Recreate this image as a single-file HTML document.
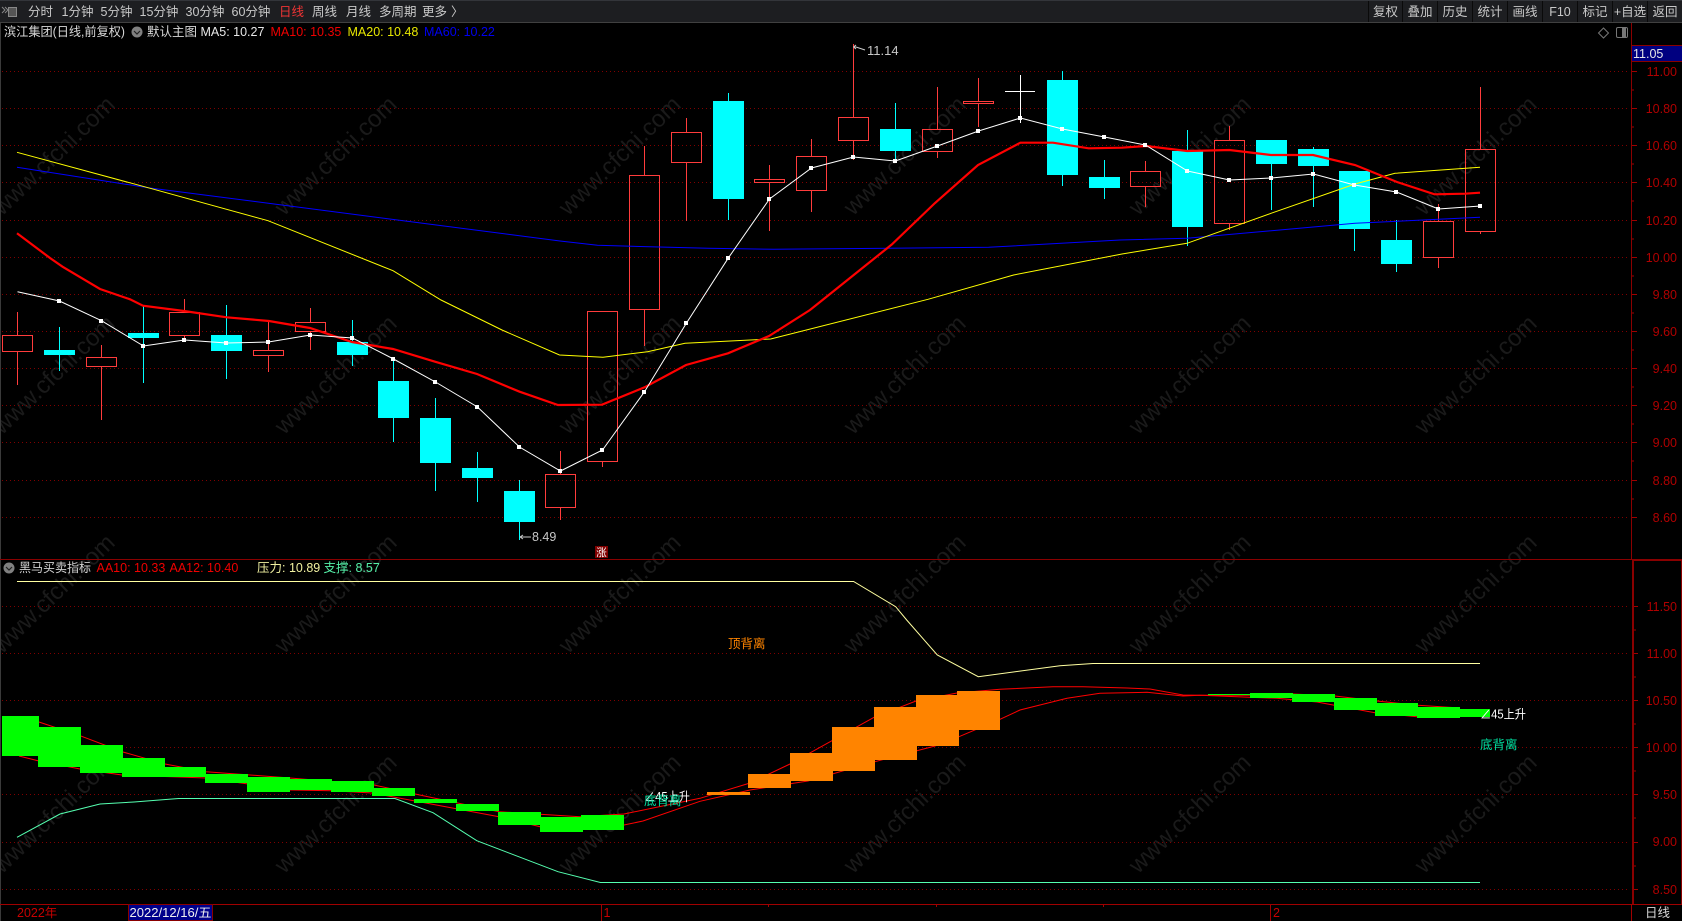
<!DOCTYPE html>
<html lang="zh"><head><meta charset="utf-8"><title>滨江集团</title>
<style>
html,body{margin:0;padding:0;background:#000;width:1682px;height:921px;overflow:hidden}
svg{display:block;position:absolute;left:0;top:0}
text{font-family:"Liberation Sans","Noto Sans CJK SC",sans-serif;font-size:12.5px}
.tb{fill:#c9c9c9;font-size:12.5px}
.c{text-anchor:middle}
.ax{fill:#b00000;font-size:12.5px;text-anchor:end}
.wm{fill:#1a1a1a;font-size:24px;text-anchor:middle;dominant-baseline:central}
.g{stroke:#800000;stroke-width:1;stroke-dasharray:1 3;fill:none}
.r{stroke:#ff3c3c;stroke-width:1;fill:none}
.cy{stroke:#00ffff;stroke-width:1;fill:none}
.cb{fill:#00ffff}
.gb{fill:#00ff00}
.ob{fill:#ff8400}
.t{stroke:#a00000;stroke-width:1;fill:none}
</style></head><body>
<svg width="1682" height="921" viewBox="0 0 1682 921" xmlns="http://www.w3.org/2000/svg">
<rect width="1682" height="921" fill="#000"/>

<!-- watermarks -->
<g class="wmg">
<text class="wm" x="54" y="156" transform="rotate(-44 54 156)">www.cfchi.com</text>
<text class="wm" x="336" y="156" transform="rotate(-44 336 156)">www.cfchi.com</text>
<text class="wm" x="620" y="156" transform="rotate(-44 620 156)">www.cfchi.com</text>
<text class="wm" x="905" y="156" transform="rotate(-44 905 156)">www.cfchi.com</text>
<text class="wm" x="1190" y="156" transform="rotate(-44 1190 156)">www.cfchi.com</text>
<text class="wm" x="1476" y="156" transform="rotate(-44 1476 156)">www.cfchi.com</text>
<text class="wm" x="54" y="375" transform="rotate(-44 54 375)">www.cfchi.com</text>
<text class="wm" x="336" y="375" transform="rotate(-44 336 375)">www.cfchi.com</text>
<text class="wm" x="620" y="375" transform="rotate(-44 620 375)">www.cfchi.com</text>
<text class="wm" x="905" y="375" transform="rotate(-44 905 375)">www.cfchi.com</text>
<text class="wm" x="1190" y="375" transform="rotate(-44 1190 375)">www.cfchi.com</text>
<text class="wm" x="1476" y="375" transform="rotate(-44 1476 375)">www.cfchi.com</text>
<text class="wm" x="54" y="594" transform="rotate(-44 54 594)">www.cfchi.com</text>
<text class="wm" x="336" y="594" transform="rotate(-44 336 594)">www.cfchi.com</text>
<text class="wm" x="620" y="594" transform="rotate(-44 620 594)">www.cfchi.com</text>
<text class="wm" x="905" y="594" transform="rotate(-44 905 594)">www.cfchi.com</text>
<text class="wm" x="1190" y="594" transform="rotate(-44 1190 594)">www.cfchi.com</text>
<text class="wm" x="1476" y="594" transform="rotate(-44 1476 594)">www.cfchi.com</text>
<text class="wm" x="54" y="814" transform="rotate(-44 54 814)">www.cfchi.com</text>
<text class="wm" x="336" y="814" transform="rotate(-44 336 814)">www.cfchi.com</text>
<text class="wm" x="620" y="814" transform="rotate(-44 620 814)">www.cfchi.com</text>
<text class="wm" x="905" y="814" transform="rotate(-44 905 814)">www.cfchi.com</text>
<text class="wm" x="1190" y="814" transform="rotate(-44 1190 814)">www.cfchi.com</text>
<text class="wm" x="1476" y="814" transform="rotate(-44 1476 814)">www.cfchi.com</text>
</g>

<!-- grid -->
<g shape-rendering="crispEdges">
<path class="g" d="M2 71.5H1627M2 108.5H1627M2 145.5H1627M2 182.5H1627M2 220.5H1627M2 257.5H1627M2 294.5H1627M2 331.5H1627M2 368.5H1627M2 405.5H1627M2 442.5H1627M2 480.5H1627M2 517.5H1627"/>
<path class="g" d="M2 606.5H1627M2 653.5H1627M2 700.5H1627M2 747.5H1627M2 794.5H1627M2 842.5H1627M2 889.5H1627"/>
</g>

<!-- candles -->
<g shape-rendering="crispEdges">
<g class="r">
<path d="M17.5 312V335M17.5 352V385"/><rect x="2.5" y="335.5" width="30" height="16"/>
<path d="M101.5 345V357M101.5 367V420"/><rect x="86.5" y="357.5" width="30" height="9"/>
<path d="M184.5 299V312M184.5 336V339"/><rect x="169.5" y="312.5" width="30" height="23"/>
<path d="M268.5 322V350M268.5 356V372"/><rect x="253.5" y="350.5" width="30" height="5"/>
<path d="M310.5 308V322M310.5 332V350"/><rect x="295.5" y="322.5" width="30" height="9"/>
<path d="M560.5 451V474M560.5 508V520"/><rect x="545.5" y="474.5" width="30" height="33"/>
<path d="M602.5 462V467"/><rect x="587.5" y="311.5" width="30" height="150"/>
<path d="M644.5 146V175M644.5 309V346"/><rect x="629.5" y="175.5" width="30" height="134"/>
<path d="M686.5 118V132M686.5 163V221"/><rect x="671.5" y="132.5" width="30" height="30"/>
<path d="M769.5 165V179M769.5 182V231"/><rect x="754.5" y="179.5" width="30" height="3"/>
<path d="M811.5 139V156M811.5 191V212"/><rect x="796.5" y="156.5" width="30" height="34"/>
<path d="M853.5 44V117M853.5 141V160"/><rect x="838.5" y="117.5" width="30" height="23"/>
<path d="M937.5 87V129M937.5 152V158"/><rect x="922.5" y="129.5" width="30" height="22"/>
<path d="M978.5 78V101M978.5 104V127"/><rect x="963.5" y="101.5" width="30" height="2"/>
<path d="M1145.5 161V171M1145.5 187V207"/><rect x="1130.5" y="171.5" width="30" height="15"/>
<path d="M1229.5 126V140M1229.5 224V230"/><rect x="1214.5" y="140.5" width="30" height="83"/>
<path d="M1438.5 204V221M1438.5 258V268"/><rect x="1423.5" y="221.5" width="30" height="36"/>
<path d="M1480.5 87V149M1480.5 232V234"/><rect x="1465.5" y="149.5" width="30" height="82"/>
</g>
<g class="cy">
<path d="M59.5 327V371M143.5 305V383M226.5 305V379M352.5 320V366M393.5 359V442M435.5 398V491M477.5 452V502M519.5 480V540"/>
<path d="M728.5 93V220M895.5 103V160M1062.5 71V186M1104.5 160V199M1187.5 130V246M1271.5 140V210M1313.5 147V207M1354.5 171V251M1396.5 220V272"/>
</g>
<rect class="cb" x="44" y="350" width="31" height="5"/>
<rect class="cb" x="128" y="333" width="31" height="5"/>
<rect class="cb" x="211" y="335" width="31" height="16"/>
<rect class="cb" x="337" y="342" width="31" height="13"/>
<rect class="cb" x="378" y="381" width="31" height="37"/>
<rect class="cb" x="420" y="418" width="31" height="45"/>
<rect class="cb" x="462" y="468" width="31" height="10"/>
<rect class="cb" x="504" y="491" width="31" height="31"/>
<rect class="cb" x="713" y="101" width="31" height="98"/>
<rect class="cb" x="880" y="129" width="31" height="22"/>
<rect class="cb" x="1047" y="80" width="31" height="95"/>
<rect class="cb" x="1089" y="177" width="31" height="11"/>
<rect class="cb" x="1172" y="151" width="31" height="76"/>
<rect class="cb" x="1256" y="140" width="31" height="24"/>
<rect class="cb" x="1298" y="149" width="31" height="17"/>
<rect class="cb" x="1339" y="171" width="31" height="58"/>
<rect class="cb" x="1381" y="240" width="31" height="24"/>
<path d="M1020.5 75V123M1005 91.5H1035" stroke="#fff" stroke-width="1" fill="none"/>
</g>

<!-- MA lines -->
<polyline fill="none" stroke="#0000ff" stroke-width="1" points="17,167.3 148,187.7 560,241 597.5,245.3 708,248.3 774,249.3 988.6,247.3 1120,240 1187,238.3 1355,223.3 1480,217.3"/>
<polyline fill="none" stroke="#ffff00" stroke-width="1" points="17,152.3 148,187.7 268,220.7 393,270.7 441,300 502,330 559.5,355 603,357.3 647.5,351.7 685,343.3 770.7,339 928,299.3 1013.6,275 1122,254 1187,243.3 1271,213.3 1355,184 1395,173.3 1480,167.3"/>
<polyline fill="none" stroke="#ff0000" stroke-width="2.2" points="17,233.3 50,258 62.5,266.7 100,289 130,299.3 143,305.7 184,311 226.6,317.3 269,321 310,328 352,342 393,349 435,361.7 477,374 519.6,391.7 558,405 602,404.7 644.6,387.3 686,365 728,353.3 769,336 810,310 822.5,300 892,244.3 935,203 978,165 1020.4,142.7 1053,142.7 1088.6,148.3 1122,147.7 1146,146 1187,151 1229.5,150 1271,155 1313,155 1355,165 1397,182 1434.5,194.3 1465,193.7 1480,192.7"/>
<polyline fill="none" stroke="#ffffff" stroke-width="1" points="17.5,291.7 59.5,301 101.5,320.7 143.5,346 184.5,340 226.5,343 268.5,342 310.5,335 352.5,338 393.5,359 435.5,382 477.5,407 519.5,447 560.5,471 602.5,450 644.5,391.7 686.5,323 728.5,257.7 769.5,199 811.5,168 853.5,157 895.5,161 937.5,146 978.5,131 1020.5,118 1062.5,129 1104.5,137 1145.5,145 1187.5,171 1229.5,180 1271.5,178 1313.5,174 1354.5,185 1396.5,192 1438.5,209 1480.5,206"/>
<g fill="#fff" shape-rendering="crispEdges">
<rect x="57" y="299" width="4" height="4"/><rect x="99" y="319" width="4" height="4"/><rect x="141" y="344" width="4" height="4"/><rect x="182" y="338" width="4" height="4"/><rect x="224" y="341" width="4" height="4"/><rect x="266" y="340" width="4" height="4"/><rect x="308" y="333" width="4" height="4"/><rect x="350" y="336" width="4" height="4"/><rect x="391" y="357" width="4" height="4"/><rect x="433" y="380" width="4" height="4"/><rect x="475" y="405" width="4" height="4"/><rect x="517" y="445" width="4" height="4"/><rect x="558" y="469" width="4" height="4"/><rect x="600" y="448" width="4" height="4"/><rect x="642" y="390" width="4" height="4"/><rect x="684" y="321" width="4" height="4"/><rect x="726" y="256" width="4" height="4"/><rect x="767" y="197" width="4" height="4"/><rect x="809" y="166" width="4" height="4"/><rect x="851" y="155" width="4" height="4"/><rect x="893" y="159" width="4" height="4"/><rect x="935" y="144" width="4" height="4"/><rect x="976" y="129" width="4" height="4"/><rect x="1018" y="116" width="4" height="4"/><rect x="1060" y="127" width="4" height="4"/><rect x="1102" y="135" width="4" height="4"/><rect x="1143" y="143" width="4" height="4"/><rect x="1185" y="169" width="4" height="4"/><rect x="1227" y="178" width="4" height="4"/><rect x="1269" y="176" width="4" height="4"/><rect x="1311" y="172" width="4" height="4"/><rect x="1352" y="183" width="4" height="4"/><rect x="1394" y="190" width="4" height="4"/><rect x="1436" y="207" width="4" height="4"/><rect x="1478" y="204" width="4" height="4"/>
</g>

<!-- high / low labels -->
<path d="M853.5 47H856M853.5 47L856 45M853.5 47L856 49M856 47L865 50" stroke="#ccc" fill="none" stroke-width="1"/>
<text x="867" y="55" fill="#c8c8c8" style="font-size:13px">11.14</text>
<path d="M520 537H531M520 537L523 535M520 537L523 539" stroke="#ccc" fill="none" stroke-width="1"/>
<text x="532" y="541" fill="#c8c8c8">8.49</text>
<rect x="595" y="546" width="13" height="12" fill="#800000"/>
<text x="601.5" y="556" class="c" fill="#fff" style="font-size:10.5px">涨</text>

<!-- lower panel lines -->
<polyline fill="none" stroke="#ff0000" stroke-width="1" points="39,722 80,735.7 123,752 165,764 206,771.7 290,778 374,785 415,794 499,811.7 580,816.7 624,814 700,798.3 750,783 790,764 832,740.7 874,717.3 916,701 957,693 1000,689.3 1053,686.7 1083,686.7 1127,688 1150,689 1183,695 1200,695.3 1247,695.3 1293,694 1335,696 1377,701 1418,705.3 1460,708"/>
<polyline fill="none" stroke="#ff0000" stroke-width="1" points="19,756 38,760.7 80,769 122,775 206,778 290,790 332,790.7 372,793 415,801 499,816.7 540,826.7 624,825 643,821 700,801.3 750,790 808,781 875,761.7 935,746 959,736.7 1000,719.3 1020,710 1067,698.3 1100,693.3 1147,692.3 1183,696 1200,695.3 1277,698.3 1317,702 1333,705 1375,712.7 1417,716.7"/>
<g shape-rendering="crispEdges">
<rect class="gb" x="2" y="716" width="37" height="40"/>
<rect class="gb" x="38" y="727" width="43" height="40"/>
<rect class="gb" x="80" y="745" width="43" height="28"/>
<rect class="gb" x="122" y="758" width="43" height="19"/>
<rect class="gb" x="165" y="767" width="41" height="10"/>
<rect class="gb" x="205" y="774" width="43" height="9"/>
<rect class="gb" x="247" y="777" width="43" height="15"/>
<rect class="gb" x="290" y="779" width="42" height="11"/>
<rect class="gb" x="331" y="781" width="43" height="11"/>
<rect class="gb" x="372" y="788" width="43" height="8"/>
<rect class="gb" x="414" y="799" width="43" height="4"/>
<rect class="gb" x="456" y="804" width="43" height="7"/>
<rect class="gb" x="498" y="812" width="43" height="13"/>
<rect class="gb" x="540" y="817" width="43" height="15"/>
<rect class="gb" x="581" y="815" width="43" height="15"/>
<rect class="ob" x="707" y="792" width="43" height="3"/>
<rect class="ob" x="748" y="774" width="43" height="14"/>
<rect class="ob" x="790" y="753" width="43" height="28"/>
<rect class="ob" x="832" y="727" width="43" height="44"/>
<rect class="ob" x="874" y="707" width="43" height="53"/>
<rect class="ob" x="916" y="695" width="43" height="51"/>
<rect class="ob" x="957" y="691" width="43" height="39"/>
<rect class="gb" x="1208" y="694" width="42" height="1"/>
<rect class="gb" x="1250" y="693" width="43" height="5"/>
<rect class="gb" x="1292" y="694" width="43" height="8"/>
<rect class="gb" x="1334" y="698" width="43" height="12"/>
<rect class="gb" x="1375" y="703" width="43" height="13"/>
<rect class="gb" x="1417" y="707" width="43" height="11"/>
<rect class="gb" x="1460" y="709" width="30" height="8"/>
</g>
<polyline fill="none" stroke="#ffffa0" stroke-width="1" points="17,581.5 853.6,581.5 895.7,606.7 906.7,620 937.3,655 978.3,676.7 1060,665.7 1093,663.5 1480,663.5"/>
<polyline fill="none" stroke="#55ffb0" stroke-width="1" points="17,837.3 60,814 100,804 134,802 178.6,798.5 395,798.5 433,812.7 476.8,840.7 558,871.7 600.4,882.5 1480,882.5"/>

<text x="728" y="648" fill="#ff8400">顶背离</text>
<text x="1480" y="749" fill="#00e0a0">底背离</text>
<text x="1480" y="718.5" fill="#fff" textLength="46" lengthAdjust="spacingAndGlyphs">∠45上升</text>
<text x="644" y="801" fill="#fff" textLength="46" lengthAdjust="spacingAndGlyphs">∠45上升</text>
<text x="644" y="805" fill="#00e0a0">底背离</text>

<!-- axes -->
<g shape-rendering="crispEdges">
<rect x="0" y="23" width="1" height="898" fill="#3a3a3a"/>
<rect x="1631" y="23" width="1" height="537" fill="#8a0000"/>
<rect x="1632" y="560" width="2" height="345" fill="#8a0000"/>
<rect x="1681" y="560" width="1" height="345" fill="#8a0000"/>
<rect x="0" y="559" width="1682" height="1" fill="#8a0000"/>
<rect x="1632" y="560" width="50" height="1" fill="#8a0000"/>
<rect x="0" y="904" width="1682" height="1" fill="#a00000"/>
<path class="t" d="M1632 71.5h5M1632 90h2M1632 108.5h5M1632 127h2M1632 145.5h5M1632 164h2M1632 182.5h5M1632 201h2M1632 220.5h5M1632 239h2M1632 257.5h5M1632 276h2M1632 294.5h5M1632 313h2M1632 331.5h5M1632 350h2M1632 368.5h5M1632 387h2M1632 405.5h5M1632 424h2M1632 442.5h5M1632 461h2M1632 480.5h5M1632 499h2M1632 517.5h5"/>
<path class="t" d="M1634 606.5h4M1634 630h2M1634 653.5h4M1634 677h2M1634 700.5h4M1634 724h2M1634 747.5h4M1634 771h2M1634 794.5h4M1634 818h2M1634 842.5h4M1634 866h2M1634 889.5h4"/>
<path class="t" d="M601.5 905V921M1270.5 905V921M1631.5 905V921M768.5 905V907M936.5 905V907M1103.5 905V907"/>
<rect x="1632" y="46" width="50" height="15" fill="#000080"/>
<rect x="1632" y="45" width="50" height="1" fill="#8a0000"/>
<rect x="1632" y="61" width="50" height="1" fill="#8a0000"/>
</g>
<text x="1633" y="58" fill="#e6e6e6" style="font-size:12.5px">11.05</text>
<text class="ax" x="1677" y="76">11.00</text>
<text class="ax" x="1677" y="113">10.80</text>
<text class="ax" x="1677" y="150">10.60</text>
<text class="ax" x="1677" y="187">10.40</text>
<text class="ax" x="1677" y="225">10.20</text>
<text class="ax" x="1677" y="262">10.00</text>
<text class="ax" x="1677" y="299">9.80</text>
<text class="ax" x="1677" y="336">9.60</text>
<text class="ax" x="1677" y="373">9.40</text>
<text class="ax" x="1677" y="410">9.20</text>
<text class="ax" x="1677" y="447">9.00</text>
<text class="ax" x="1677" y="485">8.80</text>
<text class="ax" x="1677" y="522">8.60</text>
<text class="ax" x="1677" y="611">11.50</text>
<text class="ax" x="1677" y="658">11.00</text>
<text class="ax" x="1677" y="705">10.50</text>
<text class="ax" x="1677" y="752">10.00</text>
<text class="ax" x="1677" y="799">9.50</text>
<text class="ax" x="1677" y="846">9.00</text>
<text class="ax" x="1677" y="894">8.50</text>

<!-- bottom row -->
<text x="17" y="917" fill="#c80000">2022年</text>
<rect x="128.5" y="904.5" width="84" height="16" fill="#00008b" stroke="#8a0000" shape-rendering="crispEdges"/>
<text x="129.5" y="917" fill="#f0f0f0" textLength="82" lengthAdjust="spacingAndGlyphs">2022/12/16/五</text>
<text x="603.5" y="917" fill="#c80000">1</text>
<text x="1273" y="917" fill="#c80000">2</text>
<text x="1645" y="917" fill="#d8d8d8">日线</text>

<!-- toolbar -->
<g shape-rendering="crispEdges">
<rect x="0" y="0" width="1682" height="22" fill="#1d1e21"/>
<rect x="0" y="0" width="1682" height="1" fill="#33353a"/>
<rect x="0" y="22" width="1682" height="1" fill="#404040"/>
<rect x="1368" y="1" width="1" height="21" fill="#0a0a0a"/>
<rect x="1402" y="1" width="1" height="21" fill="#0a0a0a"/>
<rect x="1437" y="1" width="1" height="21" fill="#0a0a0a"/>
<rect x="1472" y="1" width="1" height="21" fill="#0a0a0a"/>
<rect x="1507" y="1" width="1" height="21" fill="#0a0a0a"/>
<rect x="1542" y="1" width="1" height="21" fill="#0a0a0a"/>
<rect x="1577" y="1" width="1" height="21" fill="#0a0a0a"/>
<rect x="1612" y="1" width="1" height="21" fill="#0a0a0a"/>
<rect x="1647" y="1" width="1" height="21" fill="#0a0a0a"/>
</g>
<path d="M2 7l3 3-3 3M5 7l3 3-3 3" stroke="#888" fill="none" stroke-width="1"/>
<rect x="8.5" y="7.5" width="8" height="9" fill="#555" stroke="#888"/>
<text class="tb" x="28" y="16">分时</text>
<text class="tb" x="61.5" y="16">1分钟</text>
<text class="tb" x="100.5" y="16">5分钟</text>
<text class="tb" x="139.5" y="16">15分钟</text>
<text class="tb" x="185.5" y="16">30分钟</text>
<text class="tb" x="231.5" y="16">60分钟</text>
<text class="tb" x="279" y="16" style="fill:#f03434">日线</text>
<text class="tb" x="312" y="16">周线</text>
<text class="tb" x="346" y="16">月线</text>
<text class="tb" x="379" y="16">多周期</text>
<text class="tb" x="422" y="16">更多</text>
<text class="tb" x="451" y="16">〉</text>
<text class="tb c" x="1385.5" y="16">复权</text>
<text class="tb c" x="1420" y="16">叠加</text>
<text class="tb c" x="1455" y="16">历史</text>
<text class="tb c" x="1490" y="16">统计</text>
<text class="tb c" x="1525" y="16">画线</text>
<text class="tb c" x="1560" y="16">F10</text>
<text class="tb c" x="1595" y="16">标记</text>
<text class="tb c" x="1630" y="16">+自选</text>
<text class="tb c" x="1665" y="16">返回</text>

<!-- title row -->
<text x="4" y="36" fill="#d8d8d8" textLength="121" lengthAdjust="spacingAndGlyphs">滨江集团(日线,前复权)</text>
<circle cx="137" cy="32" r="5.5" fill="#808080"/>
<path d="M134 31l3 3 3-3" stroke="#222" fill="none" stroke-width="1.2"/>
<text x="147" y="36" fill="#d8d8d8">默认主图</text>
<text x="200.5" y="36" fill="#e8e8e8">MA5: 10.27</text>
<text x="270.5" y="36" fill="#f00000">MA10: 10.35</text>
<text x="347.5" y="36" fill="#e8e800">MA20: 10.48</text>
<text x="424" y="36" fill="#0000f0">MA60: 10.22</text>
<path d="M1603.5 28l5 5-5 5-5-5z" stroke="#777" fill="none"/>
<rect x="1616.5" y="27.5" width="11" height="10" rx="1.5" stroke="#777" fill="none"/>
<rect x="1622" y="28" width="4" height="9" fill="#777"/>

<!-- lower title -->
<circle cx="9" cy="568" r="5.5" fill="#808080"/>
<path d="M6 567l3 3 3-3" stroke="#222" fill="none" stroke-width="1.2"/>
<text x="19" y="572" fill="#d0d0d0" textLength="72" lengthAdjust="spacingAndGlyphs">黑马买卖指标</text>
<text x="96.5" y="572" fill="#f00000">AA10: 10.33</text>
<text x="169.5" y="572" fill="#f00000">AA12: 10.40</text>
<text x="257" y="572" fill="#f0f0a0">压力: 10.89</text>
<text x="323.5" y="572" fill="#55f0a8">支撑: 8.57</text>
</svg>
</body></html>
